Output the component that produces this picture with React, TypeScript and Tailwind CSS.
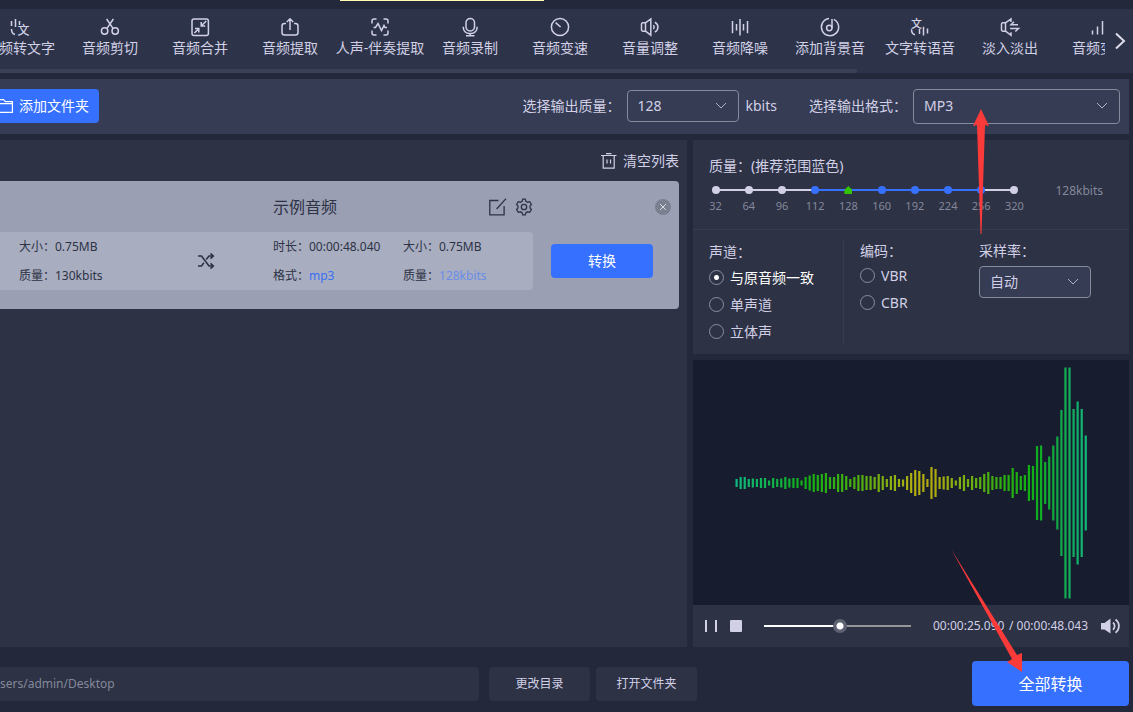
import React, { useState } from 'react';

const TOOLS: { label: string; icon: React.ReactNode }[] = [
  {
    label: '音频转文字',
    icon: (
      <>
        <path d="M1.5 4v5M5.5 2v8M9.5 4v4M1.5 12c0 3 1 5 3.5 5.5" />
        <text x="7.500" y="17.500" fontSize="12" fontWeight="500" fill="currentColor" stroke="none">文</text>
      </>
    ),
  },
  {
    label: '音频剪切',
    icon: (
      <>
        <circle cx="4.6" cy="14" r="3.2" />
        <circle cx="15.2" cy="14" r="3.2" />
        <path d="M6.6 2l6.6 9.6M13.4 2L6.8 11.6" />
      </>
    ),
  },
  {
    label: '音频合并',
    icon: (
      <>
        <rect x="2" y="2" width="16.4" height="16.4" rx="2" />
        <path d="M16.2 4L11.2 9M11.2 5v4h4M4.4 16l4.4-4.4M5 11.6h3.8v3.8" />
      </>
    ),
  },
  {
    label: '音频提取',
    icon: <path d="M6 6.5H4.5a2.5 2.5 0 0 0-2.5 2.5v6.5a2.5 2.5 0 0 0 2.5 2.5h11a2.5 2.5 0 0 0 2.5-2.5V9a2.5 2.5 0 0 0-2.5-2.5H14M10 2v11M6.8 5L10 1.800 13.200 5" />,
  },
  {
    label: '人声-伴奏提取',
    icon: <path d="M2 6.5V4a2 2 0 0 1 2-2h2.5M13.5 2H16a2 2 0 0 1 2 2v2.5M18 13.5V16a2 2 0 0 1-2 2h-2.5M6.5 18H4a2 2 0 0 1-2-2v-2.5M3.5 10.5h2l2.5-4 3.5 7 2.5-5 1 2h2" />,
  },
  {
    label: '音频录制',
    icon: (
      <>
        <rect x="6" y="1.5" width="8.500" height="12.500" rx="4.200" />
        <path d="M3.300 9.700v.8a6 6 0 0 0 6 6h1.800a6 6 0 0 0 6-6v-.8M10.200 16.500v2M6 18.700h8.500" />
      </>
    ),
  },
  {
    label: '音频变速',
    icon: (
      <>
        <circle cx="10" cy="10" r="8.600" />
        <path d="M5.600 5.600L10.600 10" />
      </>
    ),
  },
  {
    label: '音量调整',
    icon: <path d="M5.500 5.800H3A1.500 1.500 0 0 0 1.500 7.300v5.400A1.500 1.500 0 0 0 3 14.200h2.500zM5.500 5.800L10.800 2v16.200L5.500 14.200M13.300 8.200a2.600 2.600 0 0 1 0 3.800M14.800 5.200c4.200 1.800 4.200 8 0 9.800" />,
  },
  {
    label: '音频降噪',
    icon: <path d="M2.500 4v12.300M6.500 7v6.500M10 2v16.600M13.500 7v6.500M17.500 4v12.300" />,
  },
  {
    label: '添加背景音',
    icon: (
      <>
        <path d="M9 1.500a8.600 8.600 0 1 0 4.800.8" />
        <circle cx="9.300" cy="11" r="2.700" />
        <path d="M12 11V2" />
      </>
    ),
  },
  {
    label: '文字转语音',
    icon: (
      <>
        <path d="M1.500 12.300c0 3 1 5 3.500 5.400M9.500 12v5M13.500 9.700v8.800M17.500 11.500v5" />
        <text x="1" y="10.500" fontSize="11" fontWeight="500" fill="currentColor" stroke="none">文</text>
      </>
    ),
  },
  {
    label: '淡入淡出',
    icon: <path d="M5.500 5.800H3A1.500 1.500 0 0 0 1.500 7.300v5.400A1.500 1.500 0 0 0 3 14.200h2.500zM5.500 5.800L11 2v3M5.500 14.200L11 18.300v-3M18 7.800H11l3-3M10 11.500h8.500l-3.200 3" />,
  },
  {
    label: '音频变声',
    icon: <path d="M2.500 13.500v4M7.500 9.500v8M12.500 4v13.500M17.500 1.500v16" />,
  },
];

const RATES = [32, 64, 96, 112, 128, 160, 192, 224, 256, 320];
const CHANNELS = ['与原音频一致', '单声道', '立体声'];
const CODECS = ['VBR', 'CBR'];

// Peak height of every wave bar, in pixels
const PEAKS = [
  8, 12, 12, 8, 9, 8, 10, 10, 5, 10, 8, 9, 12, 9, 10, 10, 5, 12, 15, 18, 16, 18, 20, 12, 12, 18, 18, 14, 8,
  12, 16, 16, 14, 14, 12, 18, 14, 8, 14, 16, 8, 7, 14, 20, 26, 24, 18, 8, 32, 28, 12, 13, 14, 10, 5, 12, 16,
  8, 14, 10, 12, 18, 22, 14, 12, 12, 16, 16, 30, 22, 14, 16, 36, 34, 74, 75, 42, 53, 75, 93, 146, 231, 231,
  148, 163, 148, 95,
];

interface SelectProps {
  id: string;
  options: string[];
  className: string;
}

const Select: React.FC<SelectProps> = ({ id, options, className }) => (
  <div className="relative">
    <select
      id={id}
      className={`block appearance-none rounded-sm border border-[#868b9c] bg-[#353c54] pl-2.5 text-[#d2d0e6] outline-none ${className}`}
    >
      {options.map((o) => (
        <option key={o}>{o}</option>
      ))}
    </select>
    <svg className="pointer-events-none absolute right-3 top-1/2 -mt-1 h-2 w-3" viewBox="0 0 12 8" fill="none" stroke="#aeb2c4">
      <path d="M1 1l5 5 5-5" />
    </svg>
  </div>
);

interface RadioProps {
  name: string;
  label: string;
  checked: boolean;
  onChange: () => void;
}

const Radio: React.FC<RadioProps> = ({ name, label, checked, onChange }) => (
  <label className={`flex h-[27px] items-center gap-1.5 ${checked ? 'text-white' : ''}`}>
    <input
      type="radio"
      name={name}
      checked={checked}
      onChange={onChange}
      className="size-[15px] appearance-none rounded-full border border-[#8a8ea0] checked:bg-[radial-gradient(circle,#fff_2px,transparent_3px)]"
    />
    {label}
  </label>
);

const Waveform: React.FC = () => (
  <svg className="h-full w-full" viewBox="0 0 436 245">
    <defs>
      <linearGradient id="wave" gradientUnits="userSpaceOnUse" x1="42" y1="0" x2="395" y2="0">
        <stop offset="0" stopColor="#10b880" />
        <stop offset="0.12" stopColor="#12b040" />
        <stop offset="0.2" stopColor="#12b014" />
        <stop offset="0.34" stopColor="#48b00e" />
        <stop offset="0.5" stopColor="#b0b010" />
        <stop offset="0.56" stopColor="#b2aa10" />
        <stop offset="0.64" stopColor="#80b00e" />
        <stop offset="0.76" stopColor="#2cb00e" />
        <stop offset="0.84" stopColor="#10b014" />
        <stop offset="0.92" stopColor="#12a848" />
        <stop offset="1" stopColor="#10b87c" />
      </linearGradient>
    </defs>
    {PEAKS.map((h, i) => (
      <rect key={i} x={42.5 + i * 4.06} y={123 - h / 2} width="2.2" height={h} fill="url(#wave)" />
    ))}
  </svg>
);

const App: React.FC = () => {
  const [rate, setRate] = useState(128);
  const [channel, setChannel] = useState(CHANNELS[0]);
  const [codec, setCodec] = useState('');
  const [position, setPosition] = useState(52);
  const [path, setPath] = useState('sers/admin/Desktop');

  return (
    <div className="flex min-h-screen flex-col overflow-hidden bg-[#24283b] font-['Noto_Sans','Noto_Sans_CJK_SC',sans-serif] text-sm text-[#d2d0e6]">
      <div className="h-[9px]">
        <div className="ml-[340px] h-px w-[204px] bg-[#ffffb4]" />
      </div>

      <header className="flex h-16 flex-col bg-[#2d3449]">
        <div className="flex flex-1">
          <nav className="flex min-w-0 flex-1 overflow-hidden">
            <div className="-ml-[25px] flex">
              {TOOLS.map((tool) => (
                <button key={tool.label} className="flex w-[90px] shrink-0 flex-col items-center pt-2 whitespace-nowrap">
                  <svg className="size-5 overflow-visible" viewBox="0 0 20 20" fill="none" stroke="currentColor" strokeWidth="1.5">
                    {tool.icon}
                  </svg>
                  <span className="leading-[21px]">{tool.label}</span>
                </button>
              ))}
            </div>
          </nav>
          <button aria-label="更多" className="flex w-7 items-center justify-center pt-1 pl-0.5">
            <svg className="h-[18px] w-3" viewBox="0 0 12 18" fill="none" stroke="#dcdcec" strokeWidth="2">
              <path d="M2 1.5L10 9l-8 7.5" />
            </svg>
          </button>
        </div>
        <div className="mr-[276px] h-1 rounded-r-sm bg-[#3b4054]" />
      </header>

      <div className="mt-1.5 mr-1 flex h-[55px] items-center justify-end bg-[#353c54] pr-[9px] pb-px">
        <button className="mr-auto flex h-[34px] items-center gap-1.5 overflow-hidden rounded-r-sm bg-[#3670ff] pr-2.5 text-white">
          <svg className="-ml-[3px] size-4" viewBox="0 0 16 16" fill="none" stroke="currentColor" strokeWidth="1.2">
            <path d="M.6 14.400V1.600h6l1.800 2h7v10.800zM.6 5.600h14.800" />
          </svg>
          添加文件夹
        </button>
        <label htmlFor="quality">选择输出质量：</label>
        <div className="ml-1.5">
          <Select id="quality" options={['128', '192', '256', '320']} className="h-8 w-28" />
        </div>
        <span className="ml-[7px]">kbits</span>
        <label htmlFor="format" className="ml-8">选择输出格式：</label>
        <div className="relative ml-1.5">
          <Select id="format" options={['MP3', 'WAV', 'FLAC', 'AAC']} className="h-[35px] w-[207px]" />
          <svg className="pointer-events-none absolute top-5 left-[60px] z-10 h-[125px] w-4" viewBox="0 0 16 125" fill="#fb3a3a">
            <path d="M8 0l8 17-4-1-3.500 109h-1L4 16l-4 1z" />
          </svg>
        </div>
      </div>

      <main className="mt-1.5 mr-1 flex flex-1 gap-1.5">
        <section className="min-w-0 flex-1 bg-[#2d3245]">
          <div className="flex h-[41px] items-center justify-end pr-2">
            <button className="flex items-center gap-1.5">
              <svg className="size-4" viewBox="0 0 16 16" fill="none" stroke="currentColor" strokeWidth="1.2">
                <path d="M0 2.500h15.500M5 .6h5.500M2.200 2.500v12.600h11V2.500M6 6.500v4M9.500 6.500v4" />
              </svg>
              清空列表
            </button>
          </div>

          <article className="mr-2 h-32 rounded-r bg-[#9a9fb3] text-[#2d3245]">
            <div className="flex h-[51px] items-center">
              <div className="flex min-w-0 flex-1 items-center">
                <h2 className="ml-[273px] w-[216px] shrink-0 text-base">示例音频</h2>
                <button aria-label="编辑">
                  <svg className="block size-[18px]" viewBox="0 0 18 18" fill="none" stroke="currentColor" strokeWidth="1.3">
                    <path d="M9.500 2.500H.8v14.300h14.300V8M17 .6L7.600 11" />
                  </svg>
                </button>
                <button aria-label="设置" className="ml-2">
                  <svg className="block size-[18px]" viewBox="0 0 24 24" fill="none" stroke="currentColor" strokeWidth="1.7">
                    <path d="M9.500 4.300L10.300 1.500h3.400l.8 2.800 2.300 1.300 2.800-.7 2.300 3.700L20 10.700v2.600l1.900 2.100-2.300 3.700-2.800-.7-2.300 1.300-.8 2.800h-3.400l-.8-2.800-2.300-1.300-2.800.7-2.300-3.700L4 13.300v-2.600L2.100 8.600l2.300-3.700 2.800.7z" />
                    <circle cx="12" cy="12" r="3.600" />
                  </svg>
                </button>
              </div>
              <button aria-label="移除" className="mr-2 flex size-4 items-center justify-center rounded-full bg-[#7b8090]">
                <svg className="size-2" viewBox="0 0 8 8" stroke="#d6d8e2">
                  <path d="M1 1l6 6M7 1L1 7" />
                </svg>
              </button>
            </div>
            <div className="flex items-center">
              <div className="flex h-[58px] flex-1 items-center rounded-r-sm bg-[#a8adc0] text-xs">
                <div className="w-[179px] pl-[19px] leading-[29px]">
                  <p>大小：0.75MB</p>
                  <p>质量：130kbits</p>
                </div>
                <svg className="ml-[18px] h-4 w-[18px]" viewBox="0 0 18 16" fill="none" stroke="currentColor" strokeWidth="1.6">
                  <path d="M1 3h3.500l7.500 10h4M1 13h3.500l2.400-3.200M9.200 6.400L12 3h4M13.500.5L16.300 3l-2.800 2.600M13.500 10.400l2.800 2.600-2.800 2.600" />
                </svg>
                <div className="ml-[58px] w-[130px] leading-[29px]">
                  <p>时长：00:00:48.040</p>
                  <p>格式：<span className="text-[#3b6ff5]">mp3</span></p>
                </div>
                <div className="leading-[29px]">
                  <p>大小：0.75MB</p>
                  <p>质量：<span className="text-[#6b8de6]">128kbits</span></p>
                </div>
              </div>
              <button className="mr-[26px] ml-[18px] h-[34px] w-[102px] rounded-sm bg-[#3670ff] text-white">转换</button>
            </div>
          </article>
        </section>

        <aside className="flex w-[436px] shrink-0 flex-col">
          <div className="h-[214px] bg-[#2d3245]">
            <div className="h-[90px] border-b border-[#373c50] pt-4">
              <h3 className="pl-4 leading-5">质量：(推荐范围蓝色)</h3>
              <div className="mt-1.5 flex items-start">
                <div className="ml-1.5 grid w-[332px] grid-cols-10">
                  {RATES.map((r, i) => (
                    <label key={r} className="relative flex flex-col items-center text-[11px] leading-4 text-[#84889a]">
                      {i < RATES.length - 1 && (
                        <span className={`absolute top-[7px] left-1/2 h-0.5 w-full ${r >= 112 && r < 256 ? 'bg-[#3670ff]' : 'bg-[#d2d0e6]'}`} />
                      )}
                      <span className="relative flex h-4 items-center">
                        <input
                          type="radio"
                          name="rate"
                          checked={rate === r}
                          onChange={() => setRate(r)}
                          className={`size-2 appearance-none rounded-full checked:rounded-none checked:bg-[#35c405] checked:[clip-path:polygon(50%_0,100%_50%,100%_100%,0_100%,0_50%)] ${r >= 112 && r <= 256 ? 'bg-[#3670ff]' : 'bg-[#d2d0e6]'}`}
                        />
                      </span>
                      <span>{r}</span>
                    </label>
                  ))}
                </div>
                <span className="mr-[26px] ml-auto text-xs leading-[18px] text-[#84889a]">{rate}kbits</span>
              </div>
            </div>

            <div className="flex pt-2.5">
              <fieldset className="h-[104px] w-[151px] border-r border-[#373c50] pl-4">
                <legend className="float-left leading-6">声道：</legend>
                <div className="clear-both">
                  {CHANNELS.map((c) => (
                    <Radio key={c} name="channel" label={c} checked={channel === c} onChange={() => setChannel(c)} />
                  ))}
                </div>
              </fieldset>
              <fieldset className="w-[120px] pl-4">
                <legend className="float-left leading-[22px]">编码：</legend>
                <div className="clear-both">
                  {CODECS.map((c) => (
                    <Radio key={c} name="codec" label={c} checked={codec === c} onChange={() => setCodec(c)} />
                  ))}
                </div>
              </fieldset>
              <div className="pl-[15px]">
                <label htmlFor="sample" className="block pb-1 leading-[22px]">采样率：</label>
                <Select id="sample" options={['自动', '44100', '48000']} className="h-8 w-28" />
              </div>
            </div>
          </div>

          <div className="mt-1.5 min-h-[245px] flex-1 bg-[#171c2f]">
            <Waveform />
          </div>

          <div className="flex h-[42px] items-center bg-[#2d3245] pr-[9px] pl-3">
            <button aria-label="暂停" className="h-3 w-3 border-x-2 border-[#d2d0e6]" />
            <button aria-label="停止" className="ml-[13px] size-3 rounded-[1px] bg-[#d2d0e6]" />
            <input
              type="range"
              aria-label="播放进度"
              value={position}
              onChange={(e) => setPosition(Number(e.target.value))}
              className="mx-[22px] h-0.5 min-w-0 flex-1 appearance-none [&::-webkit-slider-thumb]:size-3.5 [&::-webkit-slider-thumb]:appearance-none [&::-webkit-slider-thumb]:rounded-full [&::-webkit-slider-thumb]:bg-[radial-gradient(circle,#fff_3px,#5d6172_4px)]"
              style={{ background: `linear-gradient(to right, #fff ${position}%, #96969a ${position}%)` }}
            />
            <div className="flex w-[155px] justify-between text-xs">
              <span>00:00:25.090</span>
              <span>/ 00:00:48.043</span>
            </div>
            <button aria-label="音量" className="ml-3">
              <svg className="block size-5" viewBox="0 0 20 20" fill="#d2d0e6">
                <path d="M1 7h3.500L10.500 2.500v15L4.500 13.500H1z" />
                <path d="M13 6.500c2.200 1.800 2.200 5.400 0 7.200M15.500 3.500c4.500 3.200 4.500 10 0 13.200" fill="none" stroke="#d2d0e6" strokeWidth="1.8" />
              </svg>
            </button>
          </div>
        </aside>
      </main>

      <footer className="mr-1 flex h-[65px] items-center pt-2">
        <input
          aria-label="输出目录"
          value={path}
          onChange={(e) => setPath(e.target.value)}
          className="h-[34px] min-w-0 max-w-[479px] flex-1 rounded-r-sm bg-[#2d3245] text-xs text-[#84889a] outline-none"
        />
        <button className="ml-2.5 h-[34px] w-[101px] rounded-sm bg-[#2d3245] text-xs">更改目录</button>
        <button className="ml-1.5 h-[34px] w-[101px] rounded-sm bg-[#2d3245] text-xs">打开文件夹</button>
        <button className="relative ml-auto h-[45px] w-[157px] rounded-sm bg-[#3670ff] text-base text-white">
          全部转换
          <svg className="pointer-events-none absolute -top-28 -left-[21px] z-10 h-[123px] w-[71px]" viewBox="0 0 71 123" fill="#fb3a3a">
            <path d="M0 0l66 106 5-2v19L56 113l5-3z" />
          </svg>
        </button>
      </footer>
    </div>
  );
};

export default App;
